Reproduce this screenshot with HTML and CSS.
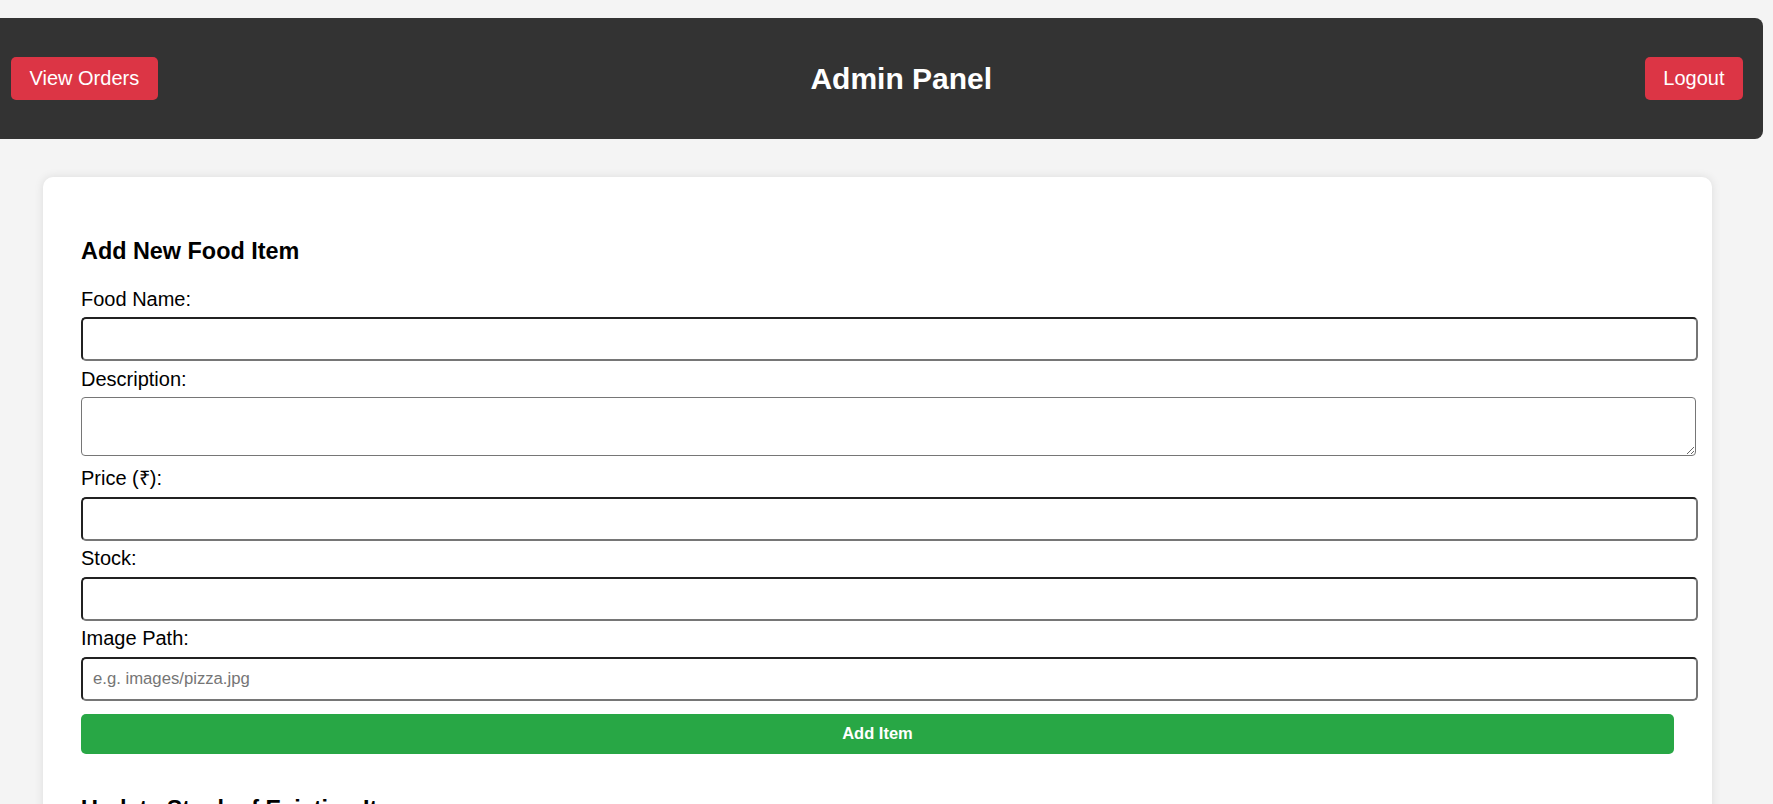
FILE: index.html
```html
<!DOCTYPE html>
<html lang="en">
<head>
<meta charset="UTF-8">
<title>Admin Panel</title>
<link rel="stylesheet" href="styles.css">
</head>
<body>
<header class="topbar">
  <button class="btn btn-danger" type="button">View Orders</button>
  <h2 class="title">Admin Panel</h2>
  <button class="btn btn-danger" type="button">Logout</button>
</header>
<main class="card">
  <section class="panel">
    <h3 class="section-title">Add New Food Item</h3>
    <form class="food-form">
      <label class="field-label">Food Name:</label>
      <input class="field" type="text">
      <label class="field-label">Description:</label>
      <textarea class="field-area"></textarea>
      <label class="field-label">Price (₹):</label>
      <input class="field" type="text">
      <label class="field-label">Stock:</label>
      <input class="field" type="text">
      <label class="field-label">Image Path:</label>
      <input class="field" type="text" placeholder="e.g. images/pizza.jpg">
      <button class="btn-submit" type="button">Add Item</button>
    </form>
  </section>
  <section class="panel panel-next">
    <h3 class="section-title">Update Stock of Existing Items</h3>
    <label class="field-label">Select Item:</label>
    <input class="field" type="text">
  </section>
</main>
</body>
</html>
```
FILE: styles.css
```css
html, body {
  margin: 0;
}

body {
  background: #f4f4f4;
  font-family: "Liberation Sans", Arial, sans-serif;
  font-size: 20px;
  color: #000;
  padding-top: 18px;
}

.topbar {
  display: flex;
  justify-content: space-between;
  align-items: center;
  background: #333;
  color: #fff;
  height: 121px;
  padding: 0 20px;
  margin: 0 10px 0 -9px;
  border-radius: 8px;
}

.title {
  font-size: 30px;
  font-weight: bold;
  margin: 0;
}

.btn {
  font-family: "Liberation Sans", Arial, sans-serif;
  font-size: 20px;
  line-height: normal;
  color: #fff;
  border: none;
  border-radius: 5px;
  padding: 10px 18.5px;
  cursor: pointer;
}

.btn-danger {
  background: #dc3545;
}

.card {
  background: #fff;
  margin: 38px 61px 0 43px;
  padding: 38px;
  border-radius: 10px;
  box-shadow: 0 0 10px rgba(0, 0, 0, 0.1);
}

.section-title {
  font-size: 23.4px;
  font-weight: bold;
  margin: 23px 0;
}

.food-form {
  margin: 0;
}

.field-label {
  display: block;
  margin: 6.4px 0;
}

.field {
  display: block;
  width: 100%;
  margin: 0;
  padding: 10px;
  border: 2px inset #767676;
  border-radius: 5px;
  font-family: "Liberation Sans", Arial, sans-serif;
  font-size: 16.7px;
  background: #fff;
}

.field::placeholder {
  color: #757575;
}

.field-area {
  display: block;
  width: 100%;
  height: 37px;
  margin: 0 0 7.5px;
  padding: 10px;
  border: 1px solid #767676;
  border-radius: 4px;
  background: #fff;
}

.btn-submit {
  display: block;
  box-sizing: border-box;
  width: 100%;
  margin-top: 13px;
  padding: 10.5px;
  background: #28a745;
  color: #fff;
  border: none;
  border-radius: 5px;
  font-family: "Liberation Sans", Arial, sans-serif;
  font-size: 16.5px;
  font-weight: bold;
  line-height: normal;
  cursor: pointer;
}

.panel-next {
  padding-top: 19px;
}
```
